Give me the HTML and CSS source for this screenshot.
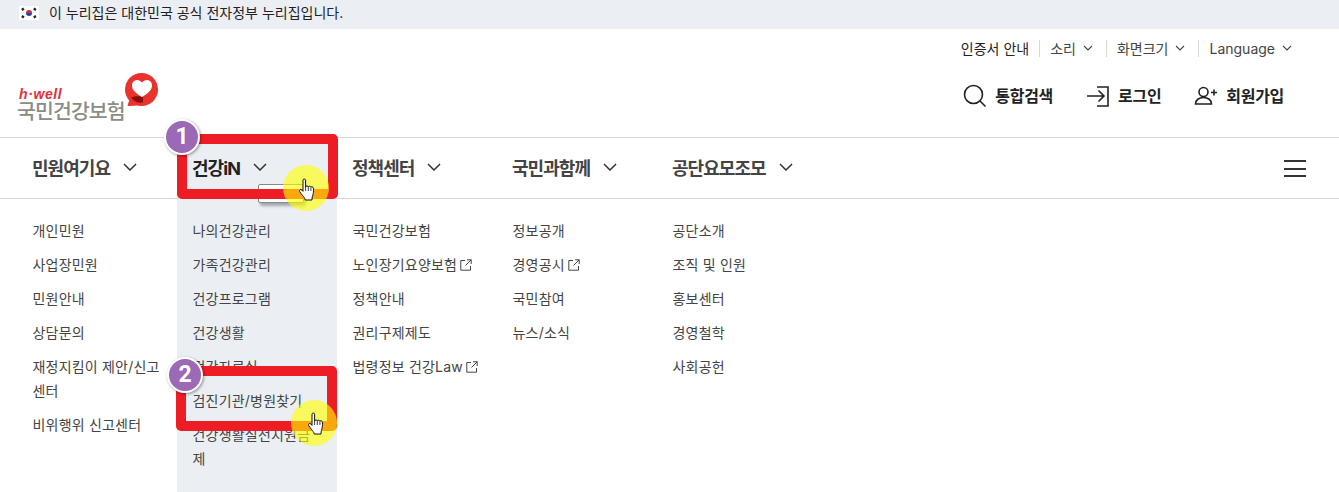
FILE: index.html
```html
<!DOCTYPE html>
<html lang="ko">
<head>
<meta charset="utf-8">
<title>국민건강보험</title>
<link rel="stylesheet" href="styles.css">
</head>
<body>
<div class="gov-banner">
  <svg class="flag" viewBox="0 0 20 14" width="20" height="14"><rect width="20" height="14" fill="#fff"/><path d="M7 7a3 3 0 0 1 6 0z" fill="#d8283c"/><path d="M7 7a3 3 0 0 0 6 0z" fill="#1c4a9c"/><g stroke="#222" stroke-width="1.3"><path d="M2.500 3.500l2-1.500M3.200 4.500l2-1.500M15 2l2.200 1.500M14.500 3l2.200 1.500M2.500 10.500l2 1.500M3.200 9.500l2 1.500M15 12l2.200-1.500M14.500 11l2.200-1.500"/></g></svg>
  <span>이 누리집은 대한민국 공식 전자정부 누리집입니다.</span>
</div>
<header class="header">
  <div class="util">
    <a class="util-item">인증서 안내</a>
    <a class="util-item">소리<svg class="chev-s" viewBox="0 0 10 6"><path d="M1 1l4 4 4-4"/></svg></a>
    <a class="util-item">화면크기<svg class="chev-s" viewBox="0 0 10 6"><path d="M1 1l4 4 4-4"/></svg></a>
    <a class="util-item">Language<svg class="chev-s" viewBox="0 0 10 6"><path d="M1 1l4 4 4-4"/></svg></a>
  </div>
  <div class="brand-row">
    <a class="logo">
      <span class="logo-text">
        <span class="logo-en">h·well</span>
        <span class="logo-ko">국민건강보험</span>
      </span>
      <svg class="logo-mark" viewBox="0 0 33 33" width="33" height="33"><circle cx="16.500" cy="16.500" r="16.500" fill="#e9332f"/><path d="M5 25L2.500 32.800c4 .5 8 0 11-1z" fill="#e9332f"/><path d="M6 24.500c3-1.200 7-1.500 12-.8v5.800c-4.500.6-8-.7-9.500-2.500z" fill="#8d0c0c"/><path d="M17 24c-5.500-3.500-10-6.500-10-11.500C7 9.300 9.400 7 12 7c2 0 3.800 1 5 2.700C18.200 8 20 7 22 7c2.600 0 5 2.300 5 5.500C27 17.500 22.500 20.500 17 24z" fill="#fff"/></svg>
    </a>
    <div class="actions">
      <a class="action"><svg viewBox="0 0 24 24" width="24" height="24" class="ico"><circle cx="10.500" cy="10.500" r="9"/><path d="M17 17l5.500 5.500"/></svg>통합검색</a>
      <a class="action"><svg viewBox="0 0 24 24" width="24" height="24" class="ico"><path d="M1 12h17M12.500 6.500l5.500 5.500-5.500 5.500M11 3h11v19H11"/></svg>로그인</a>
      <a class="action"><svg viewBox="0 0 24 24" width="24" height="24" class="ico"><circle cx="9.500" cy="8" r="4.500"/><path d="M1.500 20c0-4 3.500-6.500 8-6.500s8 2.500 8 6.500zM17 8.500h6M20 5.500v6"/></svg>회원가입</a>
    </div>
  </div>
</header>
<nav class="gnb">
  <div class="gnb-col"><span class="gnb-label">민원여기요<svg class="chev" viewBox="0 0 14 8"><path d="M1 1l6 6 6-6"/></svg></span></div>
  <div class="gnb-col active"><span class="gnb-label">건강iN<svg class="chev" viewBox="0 0 14 8"><path d="M1 1l6 6 6-6"/></svg></span></div>
  <div class="gnb-col"><span class="gnb-label">정책센터<svg class="chev" viewBox="0 0 14 8"><path d="M1 1l6 6 6-6"/></svg></span></div>
  <div class="gnb-col"><span class="gnb-label">국민과함께<svg class="chev" viewBox="0 0 14 8"><path d="M1 1l6 6 6-6"/></svg></span></div>
  <div class="gnb-col"><span class="gnb-label">공단요모조모<svg class="chev" viewBox="0 0 14 8"><path d="M1 1l6 6 6-6"/></svg></span></div>
  <button class="burger" aria-label="전체메뉴"><i></i><i></i><i></i></button>
</nav>
<div class="menu">
  <ul class="menu-col">
    <li>개인민원</li><li>사업장민원</li><li>민원안내</li><li>상담문의</li><li>재정지킴이 제안/신고센터</li><li>비위행위 신고센터</li>
  </ul>
  <ul class="menu-col active">
    <li>나의건강관리</li><li>가족건강관리</li><li>건강프로그램</li><li>건강생활</li><li>건강자료실</li><li>검진기관/병원찾기</li><li>건강생활실천지원금제</li>
  </ul>
  <ul class="menu-col">
    <li>국민건강보험</li>
    <li>노인장기요양보험<svg class="ext" viewBox="0 0 12 12"><path d="M5 1.500H.8v9.700h9.700V7M7 .8h4.200V5M11.200 .8L5.500 6.500"/></svg></li>
    <li>정책안내</li><li>권리구제제도</li>
    <li>법령정보 건강Law<svg class="ext" viewBox="0 0 12 12"><path d="M5 1.500H.8v9.700h9.700V7M7 .8h4.200V5M11.200 .8L5.500 6.500"/></svg></li>
  </ul>
  <ul class="menu-col">
    <li>정보공개</li>
    <li>경영공시<svg class="ext" viewBox="0 0 12 12"><path d="M5 1.500H.8v9.700h9.700V7M7 .8h4.200V5M11.200 .8L5.500 6.500"/></svg></li>
    <li>국민참여</li><li>뉴스/소식</li>
  </ul>
  <ul class="menu-col">
    <li>공단소개</li><li>조직 및 인원</li><li>홍보센터</li><li>경영철학</li><li>사회공헌</li>
  </ul>
</div>

<div class="tip"></div>
<div class="mark mark-1"></div>
<div class="mark mark-2"></div>
<div class="badge badge-1">1</div>
<div class="badge badge-2">2</div>
<div class="halo halo-1"></div>
<div class="halo halo-2"></div>
<svg class="hand hand-1" viewBox="0 0 18 24" width="18" height="24"><path d="M5 2.200c0-1.600 2.600-1.600 2.600 0V9c.3-1.400 2.500-1.400 2.700 0 .4-1.200 2.400-1.100 2.600.3.500-.9 2.300-.7 2.500.8.300 3 0 6-1 8.400-.3.800-.4 2-.4 3.500H7.200c-.3-2-1.500-3-2.800-4.700-1-1.300-2-2.500-2.700-3.800-.8-1.500 1-2.800 2.200-1.500l1.100 1.300z" fill="#fff" stroke="#111" stroke-width="1"/><path d="M7.600 9v4M10.300 9v4M12.900 9.500V13" stroke="#111" stroke-width=".8" fill="none"/></svg>
<svg class="hand hand-2" viewBox="0 0 18 24" width="18" height="24"><path d="M5 2.200c0-1.600 2.600-1.600 2.600 0V9c.3-1.400 2.500-1.400 2.700 0 .4-1.200 2.400-1.100 2.600.3.500-.9 2.300-.7 2.500.8.300 3 0 6-1 8.400-.3.800-.4 2-.4 3.500H7.200c-.3-2-1.500-3-2.800-4.700-1-1.300-2-2.500-2.700-3.800-.8-1.500 1-2.800 2.200-1.500l1.100 1.300z" fill="#fff" stroke="#111" stroke-width="1"/><path d="M7.600 9v4M10.300 9v4M12.900 9.500V13" stroke="#111" stroke-width=".8" fill="none"/></svg>
</body>
</html>
```
FILE: styles.css
```css
* { box-sizing: border-box; }
html, body { margin: 0; padding: 0; }
body {
  position: relative;
  height: 492px;
  overflow: hidden;
  background: #fff;
  color: #333;
  font-family: Inter, "Noto Sans CJK KR", sans-serif;
}
ul { list-style: none; margin: 0; padding: 0; }

.gov-banner {
  height: 29px;
  background: #ebeff4;
  display: flex;
  align-items: center;
  padding: 0 0 5px 19px;
  gap: 10px;
  font-size: 14px;
  color: #222;
}
.flag { flex: none; margin-top: 2px; }

.header { height: 108px; padding: 0 47px 0 17px; }
.util {
  height: 39px;
  display: flex;
  justify-content: flex-end;
  align-items: center;
  padding-bottom: 1px;
  font-size: 14px;
  color: #444;
}
.util-item { display: flex; align-items: center; padding: 0 13px 0 10px; line-height: 17px; }
.util-item:first-child { padding-right: 10px; color: #222; }
.util-item:last-child { padding-right: 0; }
.util-item + .util-item { border-left: 1px solid #d8d8d8; }
.chev-s { width: 10px; height: 6px; margin-left: 7px; fill: none; stroke: #444; stroke-width: 1.1; }

.brand-row { display: flex; justify-content: space-between; align-items: flex-start; }
.logo { display: flex; align-items: flex-start; padding-top: 5px; }
.logo-text { display: flex; flex-direction: column; padding-top: 14px; }
.logo-en { font: italic 700 14px/14px "Liberation Sans", sans-serif; color: #e0303a; padding-left: 2px; letter-spacing: .6px; }
.logo-ko { font-size: 20.500px; line-height: 22px; font-weight: 500; color: #8b8d85; letter-spacing: -.9px; white-space: nowrap; }
.logo-mark { flex: none; }

.actions { display: flex; gap: 33px; padding: 16px 8px 0 0; }
.action { display: flex; align-items: center; gap: 8px; font-size: 16px; font-weight: 700; color: #222; letter-spacing: -.3px; line-height: 24px; }
.ico { fill: none; stroke: #222; stroke-width: 1.600; }

.gnb {
  height: 62px;
  border-top: 1px solid #d8d8d8;
  border-bottom: 1px solid #d8d8d8;
  display: flex;
  padding-left: 17px;
}
.gnb-col { width: 160px; padding-left: 15px; display: flex; align-items: center; }
.gnb-col.active { background: #ebeff4; }
.gnb-label { display: flex; align-items: center; font-size: 18px; font-weight: 700; color: #444; letter-spacing: -.95px; padding-bottom: 3px; }
.active .gnb-label { color: #222; }
.chev { width: 14px; height: 8px; margin-left: 13px; fill: none; stroke: #333; stroke-width: 1.500; }
.burger { margin: 22px 33px 0 auto; width: 22px; height: 17px; padding: 0; border: 0; background: none; display: flex; flex-direction: column; justify-content: space-between; }
.burger i { display: block; height: 2px; background: #333; }

.menu { display: flex; padding-left: 17px; height: 293px; }
.menu-col { width: 160px; padding: 15px 15px 0 15.500px; font-size: 14px; line-height: 24px; color: #444; letter-spacing: .2px; }
.menu-col.active { background: #ebeff4; }
.menu-col li { padding: 5px 0; }
.ext { width: 12px; height: 12px; margin-left: 3px; vertical-align: -1px; fill: none; stroke: #444; stroke-width: 1; }

.tip { position: absolute; left: 258px; top: 184px; width: 46px; height: 19px; background: #fff; border: 1px solid #888; border-radius: 2px; box-shadow: 2px 3px 3px rgba(0,0,0,.3); }
.mark { position: absolute; width: 161px; height: 65px; border: 10px solid #ee1c25; border-radius: 5px; }
.mark-1 { left: 177px; top: 134px; }
.mark-2 { left: 176px; top: 366px; }
.badge {
  position: absolute;
  width: 36px; height: 36px;
  border-radius: 50%;
  background: #9b69b5;
  border: 2px solid #fff;
  box-shadow: 1px 1px 3px rgba(0,0,0,.4);
  color: #fff;
  font: 700 23px/32px Roboto, sans-serif;
  text-align: center;
}
.badge-1 { left: 164px; top: 119px; }
.badge-2 { left: 167px; top: 357px; }
.halo { position: absolute; width: 46px; height: 46px; border-radius: 50%; background: rgba(255,255,0,.62); }
.halo-1 { left: 283px; top: 165px; }
.halo-2 { left: 291px; top: 400px; }
.hand { position: absolute; }
.hand-1 { left: 298px; top: 178px; }
.hand-2 { left: 307px; top: 412px; }
```
